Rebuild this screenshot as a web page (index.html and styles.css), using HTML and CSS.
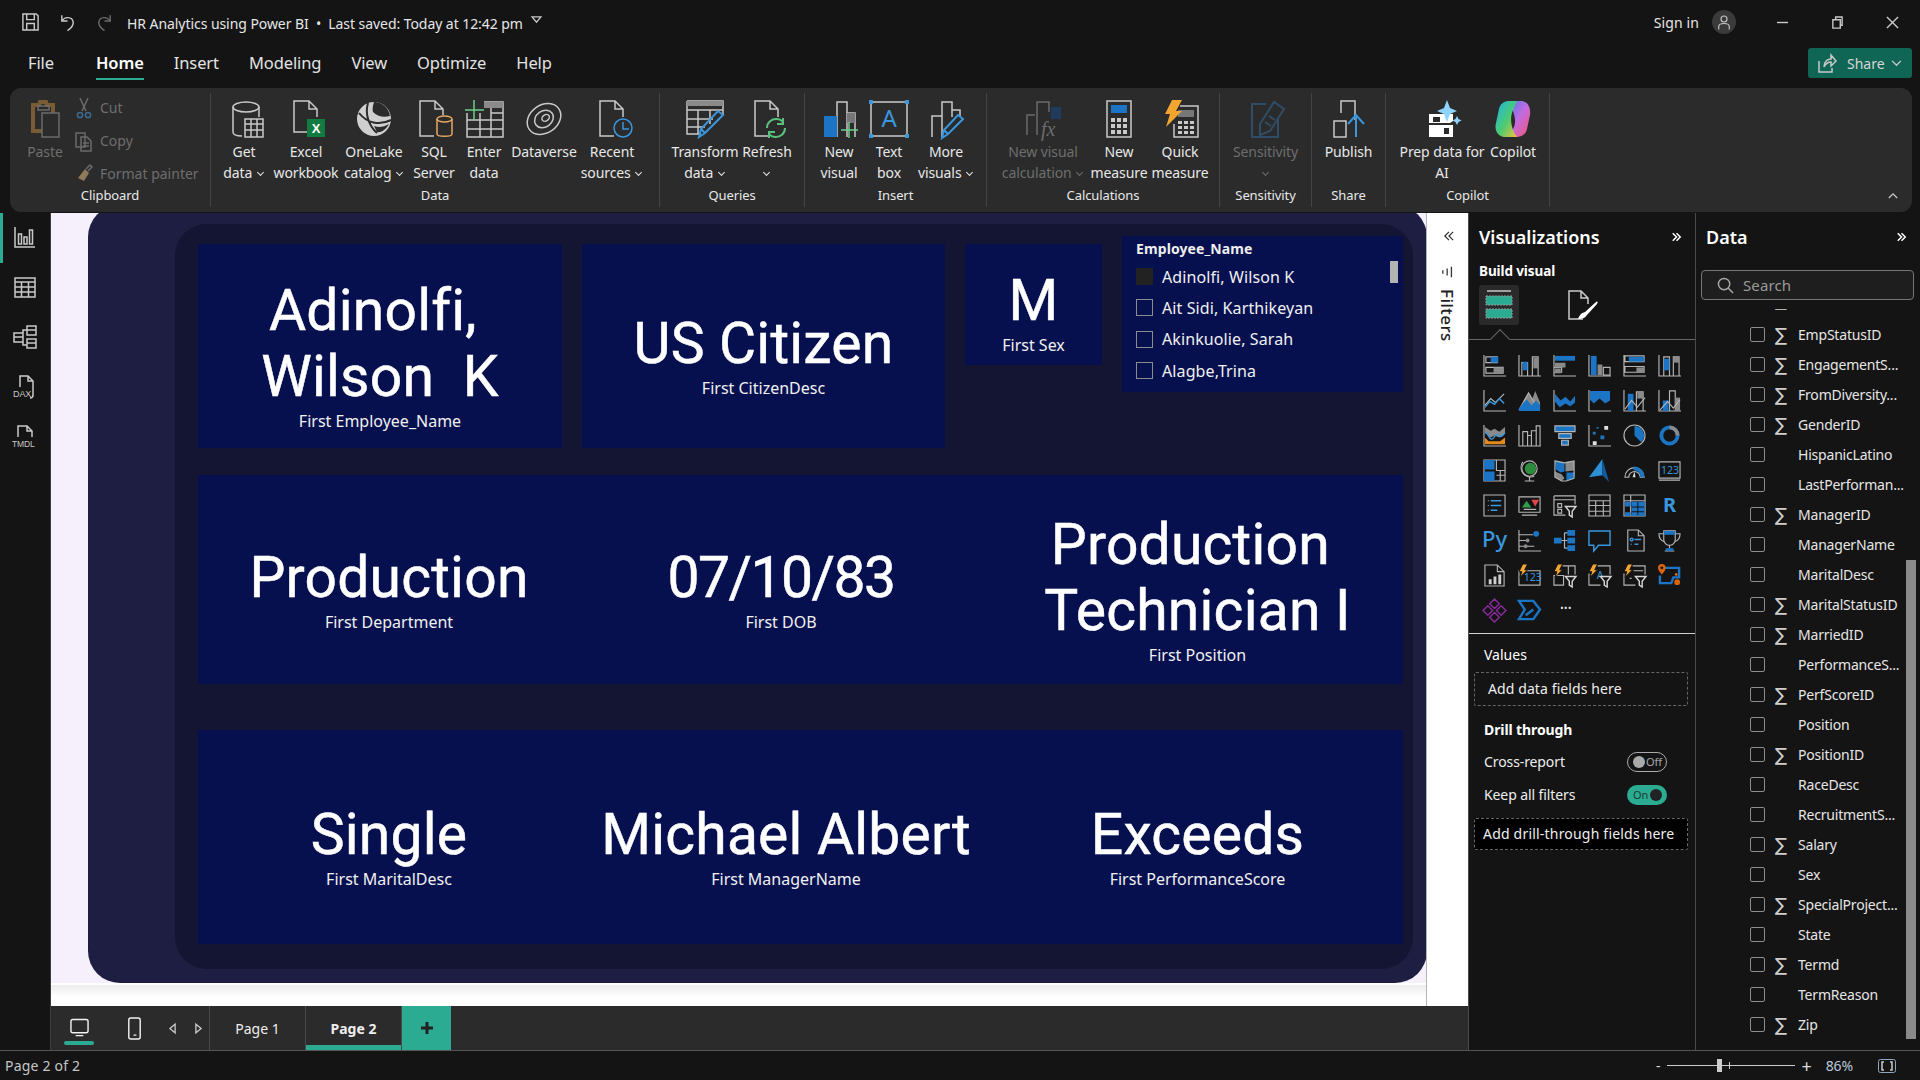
FILE: index.html
```html
<!DOCTYPE html>
<html lang="en">
<head>
    <meta charset="UTF-8">
    <title>HR Analytics using Power BI</title>
    <link rel="stylesheet" href="styles.css">
</head>
<body>
<div class="app">

    <!-- title bar -->
    <header class="titlebar">
        <svg class="tb-ic save" viewBox="0 0 20 20"><path class="ln" d="M2 1.500h14l2 2v15H2zM6 1.500v6h8v-6M6 18.500v-7h8v7"/></svg>
        <svg class="tb-ic undo" viewBox="0 0 20 20"><path class="ln" d="M4 3v6h6M4 9c3-5 11-5 12 1 .5 4-3 7-6 9"/></svg>
        <svg class="tb-ic redo" viewBox="0 0 20 20"><path class="ln dim" d="M16 3v6h-6M16 9c-3-5-11-5-12 1-.5 4 3 7 6 9"/></svg>
        <span class="doc-title">HR Analytics using Power BI &nbsp;•&nbsp; Last saved: Today at 12:42 pm</span>
        <svg class="doc-caret" viewBox="0 0 12 8"><path class="ln" d="M1 1h10L6 7z"/></svg>
        <span class="spacer"></span>
        <span class="signin">Sign in</span>
        <span class="avatar"><svg viewBox="0 0 24 24"><circle class="ln" cx="12" cy="8" r="4"/><path class="ln" d="M5 22v-4c0-3 3-4 7-4s7 1 7 4v4"/></svg></span>
        <svg class="win-ic win-min" viewBox="0 0 14 14"><path class="ln" d="M1 7h12"/></svg>
        <svg class="win-ic win-max" viewBox="0 0 14 14"><path class="ln" d="M2 4h8v9H2zM5 4V1h7v9h-2"/></svg>
        <svg class="win-ic win-close" viewBox="0 0 14 14"><path class="ln" d="M1 1l12 12M13 1L1 13"/></svg>
    </header>

    <!-- ribbon tabs -->
    <nav class="tabrow">
        <a class="tab tab-file">File</a>
        <a class="tab tab-on">Home</a>
        <a class="tab">Insert</a>
        <a class="tab">Modeling</a>
        <a class="tab">View</a>
        <a class="tab">Optimize</a>
        <a class="tab">Help</a>
        <span class="spacer"></span>
        <button class="share">
            <svg viewBox="0 0 20 20"><path class="ln" d="M2 8v11h13v-4M7 14c0-6 4-8 7-8V2l5 6-5 5V9c-3 0-5 1-7 5z"/></svg>
            <span>Share</span>
            <svg class="share-chev" viewBox="0 0 12 8"><path class="ln" d="M1 1l5 5 5-5"/></svg>
        </button>
    </nav>

    <!-- ribbon -->
    <section class="ribbon">
        <div class="rgroup g-clip">
            <div class="rbtns">
                <div class="rbtn w56 off">
                    <svg class="ric" viewBox="0 0 40 38"><path class="dimbrown" d="M8 5h6l1-3h6l1 3h6v26H8z"/><path class="fill-rib" d="M17 13h17v24H17z"/><path class="ln dim" d="M17 13h17v24H17zM13 6h11v4H13z"/></svg>
                    <span class="rlabel">Paste</span>
                </div>
                <div class="smallcol off">
                    <div class="sbtn"><svg viewBox="0 0 18 22"><path class="ln dim" d="M5 1l6 13M13 1L7 14"/><circle class="ln bluedim" cx="5" cy="18" r="2.600"/><circle class="ln bluedim" cx="13" cy="18" r="2.600"/></svg><span>Cut</span></div>
                    <div class="sbtn"><svg viewBox="0 0 18 22"><path class="ln dim" d="M1 3h9v14H1zM6 7h6l4 4v10H6zM8 13h6M8 16h6"/></svg><span>Copy</span></div>
                    <div class="sbtn"><svg viewBox="0 0 18 22"><path class="goldfill" d="M10 6l4 4-5 8-6-3z"/><path class="ln dim" d="M11 6l4-4 2 2-4 4"/></svg><span>Format painter</span></div>
                </div>
            </div>
            <div class="gname">Clipboard</div>
        </div>

        <div class="rgroup g-data">
            <div class="rbtns">
                <div class="rbtn w52">
                    <svg class="ric" viewBox="-3 0 40 38"><path class="ln" d="M6 7v25c0 3 5 4 9 4M32 7v10"/><ellipse class="ln" cx="19" cy="7" rx="13" ry="5"/><path class="ln" d="M18 19h18v18H18zM18 24h18M18 30h18M24 19v18M30 19v18"/></svg>
                    <span class="rlabel">Get<br>data <i class="chv"></i></span>
                </div>
                <div class="rbtn w72">
                    <svg class="ric" viewBox="0 0 40 38"><path class="ln" d="M24 32H8V1h15l8 8v8M23 1v8h8"/><rect class="fill-green" x="21" y="19" width="18" height="18"/><text class="xmark" x="30" y="33">X</text></svg>
                    <span class="rlabel">Excel<br>workbook</span>
                </div>
                <div class="rbtn w64">
                    <svg class="ric" viewBox="0 0 40 38"><circle class="fill-lake" cx="20" cy="19" r="17"/><path class="ln dark" d="M14 3c-3 10 0 22 9 30M5 13c8 10 20 13 32 7"/><path class="fill-rib" d="M20 2c8 0 15 6 16 14-7 2-13 0-17-4-1-3 0-7 1-10zM23 32c5 1 9-3 12-8-5 3-10 4-15 2z"/></svg>
                    <span class="rlabel">OneLake<br>catalog <i class="chv"></i></span>
                </div>
                <div class="rbtn w56">
                    <svg class="ric" viewBox="0 0 40 38"><path class="ln" d="M20 36H6V1h15l8 8v6M21 1v8h8"/><path class="ln orange" d="M23 19v15c0 3 15 3 15 0V19"/><ellipse class="ln orange" cx="30.500" cy="19" rx="7.500" ry="3"/></svg>
                    <span class="rlabel">SQL<br>Server</span>
                </div>
                <div class="rbtn w44">
                    <svg class="ric" viewBox="0 0 40 38"><path class="ln" d="M3 13v24h36V2H20M3 20h36M3 29h36M16 13v24M27 2v35M27 13h12"/><path class="tophead" d="M20 2h19v6H20z"/><path class="ln green2" d="M10 0v20M1 10h19"/></svg>
                    <span class="rlabel">Enter<br>data</span>
                </div>
                <div class="rbtn w76">
                    <svg class="ric" viewBox="0 0 40 38"><g transform="rotate(-35 20 19)"><ellipse class="ln" cx="20" cy="19" rx="18" ry="14"/><ellipse class="ln" cx="20" cy="19" rx="10" ry="8"/><ellipse class="ln" cx="22" cy="19" rx="4" ry="3"/></g></svg>
                    <span class="rlabel">Dataverse</span>
                </div>
                <div class="rbtn w60">
                    <svg class="ric" viewBox="0 0 40 38"><path class="ln" d="M22 36H8V1h15l8 8v8M23 1v8h8"/><circle class="ln blue" cx="31" cy="28" r="9"/><path class="ln blue" d="M31 22v7h6"/></svg>
                    <span class="rlabel">Recent<br>sources <i class="chv"></i></span>
                </div>
            </div>
            <div class="gname">Data</div>
        </div>

        <div class="rgroup g-query">
            <div class="rbtns">
                <div class="rbtn w66">
                    <svg class="ric" viewBox="0 0 40 38"><path class="ln" d="M2 1h36v14M2 1v33h14M2 10h36M2 19h26M2 27h18M13 10v24M25 10v14"/><path class="tophead" d="M2 1h36v5H2z"/><path class="ln blue thick" d="M14 37l2-8L33 11l5 4-18 18zM16 29l4 4"/></svg>
                    <span class="rlabel">Transform<br>data <i class="chv"></i></span>
                </div>
                <div class="rbtn w58">
                    <svg class="ric" viewBox="0 0 40 38"><path class="ln" d="M22 36H8V1h15l8 8v8M23 1v8h8"/><path class="ln green3 thick" d="M20 28c0-6 5-9 9-9 3 0 6 1 7 4M38 28c0 6-5 9-9 9-3 0-6-1-7-4M36 18v6h-6M22 38v-6h6"/></svg>
                    <span class="rlabel">Refresh<br><i class="chv solo"></i></span>
                </div>
            </div>
            <div class="gname">Queries</div>
        </div>

        <div class="rgroup g-insert">
            <div class="rbtns">
                <div class="rbtn w48">
                    <svg class="ric" viewBox="0 0 40 38"><path class="ln" d="M18 37V2h10v35M28 13h8v24"/><rect class="fill-gray" x="28" y="13" width="8" height="10"/><rect class="fill-blue" x="5" y="16" width="13" height="21"/><path class="ln green2" d="M30 22v16M22 30h17"/></svg>
                    <span class="rlabel">New<br>visual</span>
                </div>
                <div class="rbtn w52">
                    <svg class="ric" viewBox="0 0 40 38"><path class="ln" d="M2 2h36v34H2z"/><path class="corner" d="M0 0h4v4H0zM36 0h4v4h-4zM0 34h4v4H0zM36 34h4v4h-4z"/><text class="boxa" x="20" y="27">A</text></svg>
                    <span class="rlabel">Text<br>box</span>
                </div>
                <div class="rbtn w62">
                    <svg class="ric" viewBox="2 0 40 38"><path class="ln" d="M8 37V16h10v21M18 37V2h10v15M28 10h8v7"/><path class="ln blue thick" d="M18 38l2-8 14-15 5 4-15 15zM20 30l4 4"/></svg>
                    <span class="rlabel">More<br>visuals <i class="chv"></i></span>
                </div>
            </div>
            <div class="gname">Insert</div>
        </div>

        <div class="rgroup g-calc">
            <div class="rbtns">
                <div class="rbtn w96 off">
                    <svg class="ric" viewBox="0 0 40 38"><path class="ln dim" d="M4 35V15h8M14 35V2h12v10"/><rect class="fill-navy" x="28" y="7" width="10" height="12"/><text class="fx" x="18" y="36">fx</text></svg>
                    <span class="rlabel">New visual<br>calculation <i class="chv"></i></span>
                </div>
                <div class="rbtn w56">
                    <svg class="ric" viewBox="0 0 40 38"><path class="ln" d="M8 1h24v36H8z"/><rect class="fill-blue" x="12" y="5" width="16" height="8"/><path class="dots" d="M12 18h4v4h-4zM18 18h4v4h-4zM24 18h4v4h-4zM12 24h4v4h-4zM18 24h4v4h-4zM24 24h4v4h-4zM12 30h4v4h-4zM18 30h4v4h-4zM24 30h4v4h-4z"/></svg>
                    <span class="rlabel">New<br>measure</span>
                </div>
                <div class="rbtn w66">
                    <svg class="ric" viewBox="0 0 40 38"><path class="ln" d="M20 6h18v31H14V24"/><rect class="fill-gray" x="18" y="10" width="16" height="7"/><path class="dots" d="M18 21h4v3h-4zM24 21h4v3h-4zM30 21h4v3h-4zM18 26h4v3h-4zM24 26h4v3h-4zM30 26h4v3h-4zM18 31h4v3h-4zM24 31h4v3h-4zM30 31h4v3h-4z"/><path class="fill-bolt" d="M12 0h10l-6 11h6L6 27l4-13H5z"/></svg>
                    <span class="rlabel">Quick<br>measure</span>
                </div>
            </div>
            <div class="gname">Calculations</div>
        </div>

        <div class="rgroup g-sens">
            <div class="rbtns">
                <div class="rbtn w92 off">
                    <svg class="ric" viewBox="0 0 40 38"><path class="ln senscol thick" d="M20 4H6v33h26V18"/><path class="ln senscol thick" d="M14 24L28 2l10 7-14 22-10 4zM19 22l6 4M23 16l6 4"/></svg>
                    <span class="rlabel">Sensitivity<br><i class="chv solo"></i></span>
                </div>
            </div>
            <div class="gname">Sensitivity</div>
        </div>

        <div class="rgroup g-share">
            <div class="rbtns">
                <div class="rbtn w74">
                    <svg class="ric" viewBox="0 0 40 38"><path class="ln" d="M5 37V21h12v16zM12 13V1h14v19"/><path class="ln blue thick" d="M27 37V16M19 24l8-9 8 9"/></svg>
                    <span class="rlabel">Publish</span>
                </div>
            </div>
            <div class="gname">Share</div>
        </div>

        <div class="rgroup g-copilot">
            <div class="rbtns">
                <div class="rbtn w92">
                    <svg class="ric" viewBox="0 0 40 38"><path class="fill-white" d="M7 14h24v7l-3 2H7zM7 25h24v12H7z"/><rect class="fill-rib" x="11" y="17" width="7" height="5"/><rect class="fill-rib" x="22" y="28" width="5" height="6"/><path class="fill-spark" d="M25 0l3 8 7 3-7 3-3 8-3-8-7-3 7-3zM35 16l1.500 3 3 1.500-3 1.500-1.500 3-1.500-3-3-1.500 3-1.500z"/></svg>
                    <span class="rlabel">Prep data for<br>AI</span>
                </div>
                <div class="rbtn w50">
                    <svg class="ric" viewBox="0 0 40 38">
                        <defs>
                            <linearGradient id="cpa" x1="0" y1="0" x2="1" y2="1"><stop offset="0" stop-color="#1bb4e8"/><stop offset=".55" stop-color="#4ecb71"/><stop offset="1" stop-color="#f5c13c"/></linearGradient>
                            <linearGradient id="cpb" x1="0" y1="0" x2="1" y2="1"><stop offset="0" stop-color="#3d7cf2"/><stop offset=".5" stop-color="#c46be0"/><stop offset="1" stop-color="#f0566f"/></linearGradient>
                        </defs>
                        <path fill="url(#cpb)" d="M14 1h14c7 0 10 7 9 14l-3 14c-1 5-5 8-10 8h-8l5-10c2-5 2-14-7-26z"/>
                        <path fill="url(#cpa)" d="M24 37H12C5 37 1 30 3 23l3-14C7 4 11 1 16 1h8l-4 9c-3 6-3 18 4 27z"/>
                    </svg>
                    <span class="rlabel">Copilot</span>
                </div>
            </div>
            <div class="gname">Copilot</div>
        </div>
        <span class="spacer"></span>
        <svg class="rib-collapse" viewBox="0 0 12 8"><path class="ln" d="M1 7l5-5 5 5"/></svg>
    </section>

    <!-- main area -->
    <div class="workspace">
        <aside class="rail">
            <div class="rail-item rail-on"><svg viewBox="0 0 24 24"><path class="ln" d="M2 2v20h20M5.500 9h3v10h-3zM11 12h3v7h-3zM16.500 5h3v14h-3z"/></svg></div>
            <div class="rail-item"><svg viewBox="0 0 24 24"><path class="ln" d="M2 3h20v19H2zM2 7h20M2 12h20M2 17h20M8.500 7v15M15.500 7v15"/></svg></div>
            <div class="rail-item"><svg viewBox="0 0 24 24"><path class="ln" d="M14 1h9v9h-9zM14 5h9M1 8h9v9H1zM1 12h9M14 14h9v9h-9zM14 18h9M10 8V5h4M10 17v3h4"/></svg></div>
            <div class="rail-item"><svg viewBox="0 0 24 24"><path class="ln" d="M7 12V1h8l5 5v14M15 1v5h5M20 20c0 2-1 3-3 3"/><text class="rail-txt" x="0" y="22">DAX</text></svg></div>
            <div class="rail-item"><svg viewBox="0 0 24 24"><path class="ln" d="M5 12V1h9l5 5v6M14 1v5h5"/><text class="rail-txt rail-tmdl" x="-1" y="22">TMDL</text></svg></div>
        </aside>

        <main class="center">
            <div class="canvas-row">
                <div class="canvas">
                    <div class="page">
                        <div class="panel">
                            <div class="inner">
                                <div class="row row-top">
                                    <div class="card">
                                        <div class="val">Adinolfi, 
Wilson  K</div>
                                        <div class="cap">First Employee_Name</div>
                                    </div>
                                    <div class="card">
                                        <div class="val">US Citizen</div>
                                        <div class="cap">First CitizenDesc</div>
                                    </div>
                                    <div class="card card-sex">
                                        <div class="val">M</div>
                                        <div class="cap">First Sex</div>
                                    </div>
                                    <div class="slicer">
                                        <div class="sl-head">Employee_Name</div>
                                        <div class="sl-row"><i class="sl-box sl-fill"></i>Adinolfi, Wilson K</div>
                                        <div class="sl-row"><i class="sl-box"></i>Ait Sidi, Karthikeyan</div>
                                        <div class="sl-row"><i class="sl-box"></i>Akinkuolie, Sarah</div>
                                        <div class="sl-row"><i class="sl-box"></i>Alagbe,Trina</div>
                                        <span class="sl-scroll"></span>
                                    </div>
                                </div>
                                <div class="row row-mid">
                                    <div class="cell">
                                        <div class="val">Production</div>
                                        <div class="cap">First Department</div>
                                    </div>
                                    <div class="cell cell-dob">
                                        <div class="val val-date">07/10/83</div>
                                        <div class="cap">First DOB</div>
                                    </div>
                                    <div class="cell">
                                        <div class="val">Production 
Technician I</div>
                                        <div class="cap">First Position</div>
                                    </div>
                                </div>
                                <div class="row row-bot">
                                    <div class="cell">
                                        <div class="val">Single</div>
                                        <div class="cap">First MaritalDesc</div>
                                    </div>
                                    <div class="cell">
                                        <div class="val">Michael Albert</div>
                                        <div class="cap">First ManagerName</div>
                                    </div>
                                    <div class="cell">
                                        <div class="val">Exceeds</div>
                                        <div class="cap">First PerformanceScore</div>
                                    </div>
                                </div>
                            </div>
                        </div>
                    </div>
                    <div class="page-shadow"></div>
                </div>
                <div class="filters">
                    <svg class="fl-chev" viewBox="0 0 12 12"><path class="ln inkline" d="M6 1L1 6l5 5M11 1L6 6l5 5"/></svg>
                    <svg class="fl-ic" viewBox="0 0 14 14"><path class="ln inkline" d="M1 5v4M6 3v8M11 1v12"/></svg>
                    <span class="fl-text">Filters</span>
                </div>
            </div>

            <div class="pagebar">
                <div class="pb-views">
                    <span class="pb-view pb-view-on"><svg viewBox="0 0 20 20"><path class="ln wh" d="M3 1h14a2 2 0 0 1 2 2v10a2 2 0 0 1-2 2H3a2 2 0 0 1-2-2V3a2 2 0 0 1 2-2zM6 18h8"/></svg></span>
                    <span class="pb-view"><svg viewBox="0 0 20 24"><path class="ln wh" d="M6 1h8a2 2 0 0 1 2 2v18a2 2 0 0 1-2 2H6a2 2 0 0 1-2-2V3a2 2 0 0 1 2-2zM9 19h3"/></svg></span>
                    <svg class="pb-arrow" viewBox="0 0 8 12"><path class="ln" d="M7 1v10L1 6z"/></svg>
                    <svg class="pb-arrow" viewBox="0 0 8 12"><path class="ln" d="M1 1v10l6-5z"/></svg>
                </div>
                <span class="pb-tab">Page 1</span>
                <span class="pb-tab pb-tab-on">Page 2</span>
                <span class="pb-add"><svg viewBox="0 0 14 14"><path class="plus" d="M7 1v12M1 7h12"/></svg></span>
            </div>
        </main>

        <aside class="viz">
            <h2 class="pane-title">Visualizations <svg class="pane-chev" viewBox="0 0 12 12"><path class="ln" d="M1 1l5 5-5 5M6 1l5 5-5 5"/></svg></h2>
            <div class="build-label">Build visual</div>
            <div class="build-tabs">
                <span class="build-tab build-tab-on"><svg viewBox="0 0 30 30"><path class="ln" d="M3 1h24"/><rect class="tealbox" x="2" y="6" width="26" height="9"/><rect class="tealbox" x="2" y="19" width="26" height="9"/></svg></span>
                <span class="build-tab"><svg viewBox="0 0 30 30"><path class="ln" d="M15 29H1V1h12l7 7v6M13 1v7h7"/><path class="fill-white" d="M10 29c2-5 4-6 7-7L28 12c2-1 2 0 1 2L19 25c-2 3-5 4-9 4z"/></svg></span>
            </div>
            <div class="build-rule"><i></i></div>
            <div class="vizgrid">
                <svg viewBox="0 0 24 24"><path class="s" d="M1 1v22h23"/><path class="s" d="M3 3h12v6H3zM3 14h18v6H3z"/><path class="b" d="M8 3h8v6H8z"/><path class="f" d="M11 14h10v6H11z"/></svg>
                <svg viewBox="0 0 24 24"><path class="s" d="M1 1v22h23M4 9h6v14H4zM15 3h6v20h-6z"/><path class="b" d="M5 8h5v9H5z"/><path class="f" d="M16 4h5v11h-5z"/></svg>
                <svg viewBox="0 0 24 24"><path class="s" d="M1 1v22h23M1 14h8v5H1z"/><path class="b" d="M2 2h21v5H2z"/><path class="f" d="M2 9h11v5H2zM2 15h6v5H2z"/></svg>
                <svg viewBox="0 0 24 24"><path class="s" d="M1 1v22h23"/><path class="b" d="M3 2h6v20H3z"/><path class="f" d="M10 11h5v11h-5z"/><path class="s" d="M16 14h7v8h-7z"/></svg>
                <svg viewBox="0 0 24 24"><path class="s" d="M1 1v22h23M2 2h20v6H2zM2 13h20v6H2z"/><path class="b" d="M6 3h16v5H6z"/><path class="f" d="M14 14h8v5h-8z"/></svg>
                <svg viewBox="0 0 24 24"><path class="s" d="M1 1v22h23M6 3h6v20H6zM16 3h6v20h-6z"/><path class="b" d="M6 5h6v12H6z"/><path class="f" d="M16 3h6v6h-6z"/></svg>

                <svg viewBox="0 0 24 24"><path class="s" d="M1 1v22h23"/><path class="s" d="M2 17l6-7 5 4 9-9"/><path class="bl" d="M2 19l5-6 5 3 5-6 5 5"/></svg>
                <svg viewBox="0 0 24 24"><path class="f" d="M6 12l5-8 4 6 3-8 5 12v9H6z"/><path class="s" d="M1 22L11 4l7 12"/><path class="b" d="M1 23V20l8-9 5 6 5-5 4 5v6z"/></svg>
                <svg viewBox="0 0 24 24"><path class="s" d="M1 1v22h23"/><path class="b" d="M2 5l6 7 5-4 5 5 5-6v7l-5 4-5-3-6 4-5-6z"/></svg>
                <svg viewBox="0 0 24 24"><path class="s" d="M1 1v22h23"/><path class="b" d="M2 2h21v10l-5 3-6-5-6 5-4-4z"/></svg>
                <svg viewBox="0 0 24 24"><path class="s" d="M1 1v22h23M14 3h7v20h-7z"/><path class="b" d="M5 5h6v18H5z"/><path class="f" d="M15 3h6v7h-6z"/><path class="s" d="M2 21l7-9 6 7 8-10"/></svg>
                <svg viewBox="0 0 24 24"><path class="s" d="M1 1v22h23M12 2h6v21h-6z"/><path class="b" d="M5 12h6v11H5z"/><path class="f" d="M18 9h5v14h-5z"/><path class="s" d="M2 22l8-9 6 7 7-9"/></svg>

                <svg viewBox="0 0 24 24"><path class="s" d="M1 1v22h23"/><path class="f" d="M2 3l6 4 4-2 5 3 6-5v7l-6 4-5-2-4 2-6-5z"/><path class="o" d="M2 14l4 4h12l5-4v7H2z"/><path class="bl" d="M2 9c4 0 4 7 7 7s3-6 6-5 3 5 8-2"/></svg>
                <svg viewBox="0 0 24 24"><path class="s" d="M1 1v22h23M5 8h5v15H5zM10 12h4v11h-4zM14 7h5v16h-5zM19 2h4v21h-4z"/></svg>
                <svg viewBox="0 0 24 24"><path class="b" d="M2 2h21v6H2zM6 10h13v5H6zM9 17h7v5H9z"/><path class="s" d="M2 2h21v6H2zM6 10h13v5H6zM9 17h7v5H9z"/></svg>
                <svg viewBox="0 0 24 24"><path class="s" d="M1 1v22h23"/><path class="b" d="M5 8h3v3H5zM13 12h4v4h-4zM9 3h2v2H9z"/><path class="w" d="M17 2h4v4h-4zM5 18h4v4H5z"/></svg>
                <svg viewBox="0 0 24 24"><circle class="s" cx="12" cy="12" r="11"/><path class="b" d="M12 2a10 10 0 0 1 7 17L12 12z"/></svg>
                <svg viewBox="0 0 24 24"><circle class="ring" cx="12" cy="12" r="8.500"/><path class="ringg" d="M12 3.500a8.500 8.500 0 0 1 8.500 8.500"/></svg>

                <svg viewBox="0 0 24 24"><path class="s" d="M1 1h22v22H1z"/><path class="b" d="M1 1h11v10H1zM1 13h11v10H1z"/><path class="s" d="M14 1v11h9M18 12v11M14 17h9"/></svg>
                <svg viewBox="0 0 24 24"><circle class="s" cx="12" cy="10" r="8"/><circle class="g" cx="13" cy="10" r="6"/><path class="s" d="M5 3a10 10 0 0 0 12 15M7 23h10M12 19v4"/></svg>
                <svg viewBox="0 0 24 24"><path class="f" d="M2 13l7 3 3 4-3 3-7-4zM13 3l9-1v10l-9 1z"/><path class="b" d="M2 2l10 2v9l-4 1-5-3zM14 14h9l-2 7-7 2z"/><path class="s" d="M2 2l10 2 10-2v18l-8 3-5 0-7-4z"/></svg>
                <svg viewBox="0 0 24 24"><path class="tri1" d="M15 0L1 19l14-2z"/><path class="tri2" d="M15 0l7 24-7-7z"/></svg>
                <svg viewBox="0 0 24 24"><path class="s" d="M2 19a10 10 0 0 1 20 0h-4a6 6 0 0 0-12 0z"/><path class="b" d="M11 8a10 10 0 0 1 11 11h-4a6 6 0 0 0-7-7z"/><path class="w" d="M12 13l-2 6h3z"/></svg>
                <svg viewBox="0 0 24 24"><path class="s" d="M1 3h22v17H1zM1 22h22"/><text class="vt" x="3" y="16">123</text></svg>

                <svg viewBox="0 0 24 24"><path class="s" d="M1 1h22v22H1zM5 7h1M5 12h1M5 17h1"/><path class="bl" d="M8 7h11M8 12h11M8 17h7"/></svg>
                <svg viewBox="0 0 24 24"><path class="s" d="M1 3h22v16H1zM4 22h16M6 16h13"/><path class="gg" d="M9 7l5 7H4z"/><path class="rr" d="M14 6h8l-4 7z"/></svg>
                <svg viewBox="0 0 24 24"><path class="s" d="M1 2h22v9M1 6h22M1 2v20h12M5 10h4v4H5zM5 16h4v4H5z"/><path class="fn" d="M13 13h11l-4 5v6l-3-2v-4z"/></svg>
                <svg viewBox="0 0 24 24"><path class="s" d="M1 1h22v22H1zM1 7h22M1 12h22M1 18h22M8 7v16M16 7v16"/></svg>
                <svg viewBox="0 0 24 24"><path class="s" d="M1 1h22v22H1zM1 7h22M8 1v22"/><path class="b" d="M2 8h6v5H2zM9 8h6v5H9zM16 8h7v5h-7zM9 14h6v4H9zM16 14h7v4h-7zM2 19h6v4H2zM9 19h6v4H9zM16 19h7v4h-7z"/></svg>
                <svg viewBox="0 0 24 24"><text class="vr" x="12" y="19">R</text></svg>

                <svg viewBox="0 0 24 24"><text class="vpy" x="-1" y="19">Py</text></svg>
                <svg viewBox="0 0 24 24"><path class="s" d="M1 1v22h23M1 6h15M1 12h9M1 18h16"/><circle class="b" cx="19" cy="5" r="3"/><circle class="f" cx="10" cy="12" r="2"/><circle class="f" cx="8" cy="18" r="2"/></svg>
                <svg viewBox="0 0 24 24"><path class="b" d="M1 9h8v6H1zM15 1h8v6h-8zM15 9h8v6h-8zM15 17h8v6h-8z"/><path class="s" d="M9 12h6M12 4v16M12 4h3M12 20h3"/></svg>
                <svg viewBox="0 0 24 24"><path class="blx" d="M1 2h22v15H11l-5 6v-6H1z"/></svg>
                <svg viewBox="0 0 24 24"><path class="s" d="M5 1h11l6 6v16H5zM16 1v6h6"/><circle class="blx" cx="9" cy="11" r="1.500"/><path class="bl" d="M8 16h1M12 11h7M12 16h4"/></svg>
                <svg viewBox="0 0 24 24"><path class="s" d="M6 2h12v9a6 6 0 0 1-12 0zM6 5H1c0 5 2 7 5 8M18 5h5c0 5-2 7-5 8M12 17v3M7 23h10"/><path class="b" d="M6 2h12v4H6zM8 20h8v3H8z"/></svg>

                <svg viewBox="0 0 24 24"><path class="s" d="M2 1h13l7 7v15H2zM15 1v7h7"/><path class="fw" d="M6 16h3v5H6zM11 13h3v8h-3zM16 11h3v10h-3z"/></svg>
                <svg viewBox="0 0 24 24"><path class="s" d="M1 7h22v15H1z"/><text class="vt" x="6" y="18">123</text><path class="bolt" d="M5 0h5L7 6h3L2 14l2-6H1z"/></svg>
                <svg viewBox="0 0 24 24"><path class="s" d="M10 2h13v9M1 12h10v10H1zM16 2v9"/><path class="bolt" d="M5 0h5L7 6h3L2 14l2-6H1z"/><path class="fn" d="M13 13h11l-4 5v6l-3-2v-4z"/></svg>
                <svg viewBox="0 0 24 24"><path class="s" d="M10 2h13v9M1 10v12h12"/><text class="vt" x="9" y="16">A</text><path class="bolt" d="M5 0h5L7 6h3L2 14l2-6H1z"/><path class="fn" d="M13 13h11l-4 5v6l-3-2v-4z"/></svg>
                <svg viewBox="0 0 24 24"><path class="s" d="M10 2h13v9M1 10v12h12M11 7h10M7 15h2"/><path class="bolt" d="M5 0h5L7 6h3L2 14l2-6H1z"/><path class="fn" d="M13 13h11l-4 5v6l-3-2v-4z"/></svg>
                <svg viewBox="0 0 24 24"><path class="blx2" d="M7 4h15v10h-6l-2 6H2v-8"/><path class="oo" d="M4 0a4 4 0 0 1 4 4c0 3-4 7-4 7S0 7 0 4a4 4 0 0 1 4-4z"/><circle class="bk" cx="4" cy="4" r="1.500"/><circle class="oo" cx="20" cy="19" r="3"/><circle class="oo" cx="19" cy="11" r="1.500"/></svg>

                <svg viewBox="0 0 24 24"><path class="pur" d="M7 5l5-5 5 5-5 5zM14 12l5-5 5 5-5 5zM0 12l5-5 5 5-5 5zM7 19l5-5 5 5-5 5z"/></svg>
                <svg viewBox="0 0 24 24"><path class="blx2" d="M1 2h15l7 9-7 10H1l6-10zM8 17l8-6"/></svg>
                <span class="viz-more">•••</span>
            </div>
            <div class="viz-rule"></div>
            <div class="well-label">Values</div>
            <div class="well">Add data fields here</div>
            <div class="drill-title">Drill through</div>
            <div class="toggle-row toggle-first"><span>Cross-report</span><span class="toggle toggle-off"><i></i>Off</span></div>
            <div class="toggle-row"><span>Keep all filters</span><span class="toggle toggle-on">On<i></i></span></div>
            <div class="well well-black">Add drill-through fields here</div>
        </aside>

        <aside class="data">
            <h2 class="pane-title">Data <svg class="pane-chev" viewBox="0 0 12 12"><path class="ln" d="M1 1l5 5-5 5M6 1l5 5-5 5"/></svg></h2>
            <div class="search">
                <svg viewBox="0 0 18 18"><circle class="ln" cx="7.500" cy="7.500" r="6"/><path class="ln" d="M12 12l5 5"/></svg>
                <span>Search</span>
            </div>
            <div class="fields">
                <div class="field field-cut"><i class="cb"></i><b class="sig">∑</b><span>EmpID</span></div>
                <div class="field"><i class="cb"></i><b class="sig">∑</b><span>EmpStatusID</span></div>
                <div class="field"><i class="cb"></i><b class="sig">∑</b><span>EngagementS...</span></div>
                <div class="field"><i class="cb"></i><b class="sig">∑</b><span>FromDiversity...</span></div>
                <div class="field"><i class="cb"></i><b class="sig">∑</b><span>GenderID</span></div>
                <div class="field"><i class="cb"></i><b class="sig"></b><span>HispanicLatino</span></div>
                <div class="field"><i class="cb"></i><b class="sig"></b><span>LastPerforman...</span></div>
                <div class="field"><i class="cb"></i><b class="sig">∑</b><span>ManagerID</span></div>
                <div class="field"><i class="cb"></i><b class="sig"></b><span>ManagerName</span></div>
                <div class="field"><i class="cb"></i><b class="sig"></b><span>MaritalDesc</span></div>
                <div class="field"><i class="cb"></i><b class="sig">∑</b><span>MaritalStatusID</span></div>
                <div class="field"><i class="cb"></i><b class="sig">∑</b><span>MarriedID</span></div>
                <div class="field"><i class="cb"></i><b class="sig"></b><span>PerformanceS...</span></div>
                <div class="field"><i class="cb"></i><b class="sig">∑</b><span>PerfScoreID</span></div>
                <div class="field"><i class="cb"></i><b class="sig"></b><span>Position</span></div>
                <div class="field"><i class="cb"></i><b class="sig">∑</b><span>PositionID</span></div>
                <div class="field"><i class="cb"></i><b class="sig"></b><span>RaceDesc</span></div>
                <div class="field"><i class="cb"></i><b class="sig"></b><span>RecruitmentS...</span></div>
                <div class="field"><i class="cb"></i><b class="sig">∑</b><span>Salary</span></div>
                <div class="field"><i class="cb"></i><b class="sig"></b><span>Sex</span></div>
                <div class="field"><i class="cb"></i><b class="sig">∑</b><span>SpecialProject...</span></div>
                <div class="field"><i class="cb"></i><b class="sig"></b><span>State</span></div>
                <div class="field"><i class="cb"></i><b class="sig">∑</b><span>Termd</span></div>
                <div class="field"><i class="cb"></i><b class="sig"></b><span>TermReason</span></div>
                <div class="field"><i class="cb"></i><b class="sig">∑</b><span>Zip</span></div>
                <span class="fields-scroll"></span>
            </div>
        </aside>
    </div>

    <!-- status bar -->
    <footer class="status">
        <span class="status-text">Page 2 of 2</span>
        <span class="spacer"></span>
        <span class="zoom-minus">-</span>
        <span class="zoom-track"><i class="zoom-thumb"></i><i class="zoom-tick"></i></span>
        <span class="zoom-plus">+</span>
        <span class="zoom-pct">86%</span>
        <svg class="zoom-fit" viewBox="0 0 18 14"><rect class="fitbox" x="0.500" y="0.500" width="17" height="13" rx="2"/><path class="ln" d="M6 3H4v8h2M12 3h2v8h-2"/></svg>
    </footer>
</div>
</body>
</html>
```

FILE: styles.css
```css
/* Power BI Desktop dark shell */
* {
    box-sizing: border-box;
}
html, body {
    margin: 0;
    padding: 0;
    height: 100%;
    overflow: hidden;
}
body {
    background: #141414;
    color: #fff;
    font-family: "Noto Sans", "Open Sans", sans-serif;
    font-size: 14px;
    letter-spacing: -0.1px;
}
.app {
    width: 1920px;
    height: 1080px;
    display: flex;
    flex-direction: column;
    overflow: hidden;
}
.spacer {
    flex: 1;
}
svg {
    display: block;
    overflow: visible;
}

/* shared svg strokes */
.ln { fill: none; stroke: #c9c9c9; stroke-width: 1.5; }
.ln.wh { stroke: #f2f2f2; }
.ln.dim { stroke: #6b6b6b; }
.ln.bluedim { stroke: #3d6a90; }
.ln.dark { stroke: #2b2b2b; stroke-width: 2; }
.ln.orange { stroke: #e8a860; }
.ln.blue { stroke: #3a96dd; }
.ln.green2 { stroke: #6fd08c; stroke-width: 1.5; }
.ln.green3 { stroke: #57c17b; }
.ln.thick { stroke-width: 2; }
.ln.senscol { stroke: #2f4d66; }
.ln.inkline { stroke: #333; }
.dimbrown { fill: none; stroke: #7a5c34; stroke-width: 4; }
.goldfill { fill: #8d7a58; }
.fill-rib { fill: #2b2b2b; }
.fill-green { fill: #107c41; }
.fill-lake { fill: #cfcfcf; }
.fill-gray { fill: #777; }
.fill-blue { fill: #1c74c4; }
.fill-navy { fill: #1e3a5c; }
.fill-bolt { fill: #f2a62f; }
.fill-white { fill: #fff; }
.fill-spark { fill: #8fd3ff; }
.tophead { fill: #8a8a8a; }
.corner { fill: #3a96dd; }
.dots { fill: #c9c9c9; }
.xmark { fill: #fff; font: 700 13px "Liberation Sans", sans-serif; text-anchor: middle; }
.boxa { fill: #3a96dd; font: 400 24px "Noto Sans", sans-serif; text-anchor: middle; }
.fx { fill: #6b6b6b; font: italic 20px "Liberation Serif", serif; }

/* title bar */
.titlebar {
    height: 47px;
    flex: none;
    display: flex;
    align-items: center;
    padding: 0 0 3px 21px;
}
.tb-ic {
    width: 19px;
    height: 20px;
}
.undo { margin-left: 18px; }
.redo { margin-left: 18px; }
.doc-title {
    margin: 2px 0 0 13px;
    font-size: 14px;
    color: #e6e6e6;
    white-space: nowrap;
    letter-spacing: -0.06px;
}
.doc-caret {
    width: 11px;
    height: 7px;
    margin: -6px 0 0 8px;
}
.signin {
    color: #e6e6e6;
    font-size: 14px;
    letter-spacing: 0.1px;
}
.avatar {
    width: 24px;
    height: 24px;
    border-radius: 50%;
    background: #3a3a3a;
    margin: 0 0 0 13px;
    padding: 3px;
}
.win-ic {
    width: 13px;
    height: 13px;
}
.win-min { margin-left: 40px; }
.win-max { margin-left: 42px; }
.win-close { margin: 0 21px 0 42px; }

/* ribbon tabs */
.tabrow {
    height: 41px;
    flex: none;
    display: flex;
    align-items: center;
    padding: 0 8px 9px 28px;
    gap: 30px;
}
.tab {
    font-size: 16.500px;
    letter-spacing: -0.1px;
    color: #e3e3e3;
    position: relative;
    line-height: 24px;
    white-space: nowrap;
}
.tab-file { margin-right: 12px; }
.tab-on {
    color: #fff;
    font-weight: 600;
}
.tab-on::after {
    content: "";
    position: absolute;
    left: 0;
    right: 0;
    bottom: -5px;
    height: 2px;
    background: #2bab91;
}
.share {
    width: 104px;
    height: 30px;
    background: #0f6655;
    color: #d7d7d7;
    border: none;
    border-radius: 3px;
    display: flex;
    align-items: center;
    padding: 0 0 0 9px;
    font: inherit;
    font-size: 14px;
}
.share svg {
    width: 20px;
    height: 20px;
    margin-right: 10px;
}
.share svg.share-chev {
    width: 11px;
    height: 7px;
    margin: 0 0 0 6px;
}

/* ribbon */
.ribbon {
    height: 124px;
    margin: 0 8px 0 10px;
    background: #2b2b2b;
    border-radius: 11px;
    display: flex;
    flex: none;
}
.rgroup {
    margin: 5px 0;
    height: 114px;
    border-right: 1px solid #444;
    padding-top: 7px;
}
.g-clip { width: 201px; }
.g-data { width: 449px; }
.g-query { width: 145px; }
.g-insert { width: 182px; }
.g-calc { width: 233px; }
.g-sens { width: 92px; }
.g-share { width: 74px; }
.g-copilot { width: 164px; }
.rbtns {
    display: flex;
    height: 85px;
}
.g-clip .rbtns { padding-left: 7px; }
.g-data .rbtns { padding-left: 7px; }
.g-query .rbtns { padding-left: 12px; }
.g-insert .rbtns { padding-left: 10px; }
.g-calc .rbtns { padding-left: 8px; }
.g-copilot .rbtns { padding-left: 10px; }
.rbtn {
    display: flex;
    flex-direction: column;
    align-items: center;
    color: #e8e8e8;
    font-size: 14px;
    line-height: 20.500px;
    text-align: center;
    white-space: nowrap;
}
.ric {
    width: 40px;
    height: 38px;
    margin-bottom: 4px;
    flex: none;
}
.w44 { width: 44px; }
.w48 { width: 48px; }
.w50 { width: 50px; }
.w52 { width: 52px; }
.w56 { width: 56px; }
.w58 { width: 58px; }
.w60 { width: 60px; }
.w62 { width: 62px; }
.w64 { width: 64px; }
.w66 { width: 66px; }
.w72 { width: 72px; }
.w74 { width: 74px; }
.w76 { width: 76px; }
.w92 { width: 92px; }
.w96 { width: 96px; }
.off { color: #6e6e6e; }
.chv {
    display: inline-block;
    width: 5px;
    height: 5px;
    border-right: 1px solid currentColor;
    border-bottom: 1px solid currentColor;
    transform: rotate(45deg);
    margin: 0 2px 3px 2px;
}
.gname {
    height: 20px;
    line-height: 20px;
    text-align: center;
    font-size: 13px;
    color: #e8e8e8;
}
.smallcol {
    margin: -9px 0 0 2px;
    height: 99px;
}
.sbtn {
    height: 33px;
    display: flex;
    align-items: center;
    gap: 7px;
    white-space: nowrap;
    letter-spacing: 0;
}
.sbtn svg {
    width: 18px;
    height: 22px;
}
.rib-collapse {
    width: 10px;
    height: 7px;
    margin: 104px 14px 0 0;
}

/* workspace */
.workspace {
    flex: 1;
    display: flex;
    min-height: 0;
    padding-top: 1px;
}
.rail {
    width: 51px;
    border-right: 1px solid #3d3d3d;
    flex: none;
    display: flex;
    flex-direction: column;
}
.rail-item {
    height: 50px;
    display: flex;
    align-items: center;
    justify-content: center;
    padding-bottom: 2px;
}
.rail-item svg {
    width: 24px;
    height: 24px;
}
.rail-on {
    box-shadow: inset 3px 0 0 #2bab91;
}
.rail-txt {
    fill: #c9c9c9;
    font: 9px "Liberation Sans", sans-serif;
}
.rail-tmdl { font-size: 8.500px; }

.center {
    width: 1417px;
    flex: none;
    display: flex;
    flex-direction: column;
}
.canvas-row {
    flex: 1;
    display: flex;
    min-height: 0;
    background: #fff;
}
.canvas {
    width: 1376px;
    flex: none;
    border-right: 1px solid #b5b5b5;
}
.page {
    height: 770px;
    background: #f5f0fc;
    overflow: hidden;
}
.page-shadow {
    height: 12px;
    margin-top: 2px;
    background: linear-gradient(#ececec, #fff);
}
.panel {
    width: 1339px;
    height: 778px;
    margin: -8px 0 0 37px;
    background: #1e1e42;
    border-radius: 32px;
    padding: 19px 14px 14px 87px;
}
.inner {
    height: 745px;
    background: #141433;
    border-radius: 32px;
    padding: 20px 10px 0 23px;
}
.row {
    display: grid;
    color: #fff;
}
.row-top {
    grid-template-columns: 364px 363px 137px 281px;
    column-gap: 20px;
    height: 204px;
}
.row-mid, .row-bot {
    grid-template-columns: 382px 412px 411px;
    background: #07104f;
}
.row-mid {
    height: 209px;
    margin-top: 27px;
}
.row-bot {
    height: 214px;
    margin-top: 46px;
}
.card, .cell {
    background: #07104f;
    display: flex;
    flex-direction: column;
    align-items: center;
    justify-content: center;
    padding-top: 17px;
}
.row-mid .cell {
    padding-top: 18px;
}
.row-mid .cell-dob {
    padding-right: 10px;
}
.card-sex {
    height: 121px;
    padding-top: 14px;
}
.val {
    font-family: Roboto, sans-serif;
    font-size: 57px;
    font-weight: 400;
    -webkit-text-stroke: 0.5px #fff;
    line-height: 66px;
    white-space: pre;
    text-align: center;
    letter-spacing: 0.2px;
}
.val-date {
    letter-spacing: -1.5px;
}
.cap {
    font-size: 16px;
    line-height: 22px;
    color: #f0f0f0;
    white-space: nowrap;
    letter-spacing: 0;
}
.slicer {
    background: #07104f;
    height: 156px;
    margin-top: -8px;
    padding: 3px 0 0 14px;
    position: relative;
}
.sl-head {
    font-weight: 700;
    font-size: 14px;
    line-height: 19px;
    color: #eee;
    margin-bottom: 3px;
    letter-spacing: 0.1px;
}
.sl-row {
    height: 31.300px;
    display: flex;
    align-items: center;
    font-size: 16px;
    color: #f0f0f0;
    letter-spacing: 0.1px;
}
.sl-box {
    width: 17px;
    height: 17px;
    border: 1px solid #8c8c8c;
    margin-right: 9px;
}
.sl-fill {
    background: #222;
    border-color: #222;
}
.sl-scroll {
    position: absolute;
    left: 268px;
    top: 25px;
    width: 8px;
    height: 22px;
    background: #b3b3b3;
}

/* filters strip */
.filters {
    width: 41px;
    flex: none;
    display: flex;
    flex-direction: column;
    align-items: center;
    color: #222;
}
.fl-chev {
    width: 10px;
    height: 10px;
    margin: 18px 0 0 2px;
}
.fl-ic {
    width: 12px;
    height: 12px;
    margin-top: 25px;
}
.fl-text {
    writing-mode: vertical-rl;
    margin-top: 11px;
    font-size: 17px;
    font-weight: 500;
    letter-spacing: 0.4px;
}

/* page tabs */
.pagebar {
    height: 44px;
    background: #2b2b2b;
    display: flex;
    flex: none;
    font-size: 14px;
}
.pb-views {
    width: 159px;
    display: flex;
    align-items: center;
    border-right: 1px solid #4a4a4a;
}
.pb-view {
    height: 100%;
    display: flex;
    flex: none;
    align-items: center;
    justify-content: center;
    position: relative;
}
.pb-view:first-child {
    width: 56px;
}
.pb-view:nth-child(2) {
    width: 54px;
}
.pb-view svg {
    width: 19px;
    height: 20px;
}
.pb-view:nth-child(2) svg {
    height: 23px;
}
.pb-view-on::after {
    content: "";
    position: absolute;
    left: 13px;
    bottom: 5px;
    width: 30px;
    height: 4px;
    border-radius: 2px;
    background: #2bab91;
}
.pb-arrow {
    width: 7px;
    height: 11px;
    flex: none;
    margin-left: 8px;
}
.pb-arrow + .pb-arrow {
    margin-left: 19px;
}
.pb-tab {
    width: 96px;
    display: flex;
    align-items: center;
    justify-content: center;
    border-right: 1px solid #4a4a4a;
    color: #eee;
    letter-spacing: 0;
}
.pb-tab-on {
    font-weight: 700;
    box-shadow: inset 0 -5px 0 #2bab91;
}
.pb-add {
    width: 49px;
    background: #2bab91;
    display: flex;
    align-items: center;
    justify-content: center;
}
.pb-add svg {
    width: 14px;
    height: 14px;
}
.plus {
    fill: none;
    stroke: #222;
    stroke-width: 3;
}

/* visualizations pane */
.viz, .data {
    flex: none;
    border-left: 1px solid #4a4a4a;
    padding-top: 11px;
    position: relative;
}
.viz {
    width: 227px;
}
.data {
    width: 225px;
}
.pane-title {
    margin: 0;
    padding: 0 0 0 10px;
    font-size: 18px;
    line-height: 26px;
    font-weight: 600;
    letter-spacing: 0;
    display: flex;
    justify-content: space-between;
    align-items: center;
}
.pane-chev {
    width: 9px;
    height: 10px;
    margin-right: 14px;
}
.pane-chev .ln {
    stroke: #fff;
    stroke-width: 2;
}
.build-label {
    margin: 11px 0 0 10px;
    font-weight: 700;
    font-size: 13.500px;
    line-height: 20px;
}
.build-tabs {
    display: flex;
    margin: 4px 0 0 10px;
    gap: 44px;
}
.build-tab {
    width: 40px;
    height: 40px;
    padding: 5px;
    border-radius: 3px;
}
.build-tab-on {
    background: #2a2a2a;
}
.build-tab svg {
    width: 30px;
    height: 30px;
}
.tealbox {
    fill: #2bab91;
    stroke: #9a9a9a;
    stroke-dasharray: 2 1;
}
.build-rule {
    height: 1px;
    background: #666;
    margin-top: 14px;
    position: relative;
}
.build-rule i {
    position: absolute;
    left: 24px;
    top: -7px;
    width: 14px;
    height: 14px;
    transform: rotate(45deg);
    background: #141414;
    border-left: 1px solid #666;
    border-top: 1px solid #666;
}
.vizgrid {
    display: grid;
    grid-template-columns: repeat(6, 35px);
    grid-auto-rows: 35px;
    margin: 14px 0 0 14px;
}
.vizgrid svg {
    width: 23px;
    height: 23px;
}
.s { fill: none; stroke: #b5b5b5; stroke-width: 1.200; }
.b { fill: #1c74c4; }
.f { fill: #8a8a8a; }
.g { fill: #2e8b3d; }
.w { fill: #e0e0e0; }
.o { fill: #e08a1e; }
.fw { fill: #cfcfcf; }
.bl { fill: none; stroke: #3a96dd; stroke-width: 1.500; }
.blx { fill: none; stroke: #3a96dd; stroke-width: 1.500; }
.blx2 { fill: none; stroke: #1c74c4; stroke-width: 2.500; }
.ring { fill: none; stroke: #1c74c4; stroke-width: 4; }
.ringg { fill: none; stroke: #8a8a8a; stroke-width: 4; }
.tri1 { fill: #2d8fd5; }
.tri2 { fill: #135c9c; }
.gg { fill: #2e9b4d; }
.rr { fill: #e0474c; }
.fn { fill: #141414; stroke: #d5d5d5; stroke-width: 1.500; }
.bolt { fill: #f2a62f; stroke: #141414; }
.oo { fill: #d9640b; }
.bk { fill: #141414; }
.pur { fill: none; stroke: #8a2a9e; stroke-width: 1.500; }
.vt { fill: #3a96dd; font: 11px "Noto Sans", sans-serif; letter-spacing: 0; }
.vr { fill: #3a96dd; font: 700 21px "Noto Sans", sans-serif; text-anchor: middle; letter-spacing: 0; }
.vpy { fill: #3a96dd; font: 500 23px "Noto Sans", sans-serif; letter-spacing: 0; }
.viz-more {
    width: 23px;
    font-size: 9px;
    color: #eee;
    letter-spacing: 0.5px;
    line-height: 18px;
    text-align: center;
    padding-left: 3px;
}
.viz-rule {
    height: 1px;
    background: #cfcfcf;
    margin-top: -1px;
}
.well-label {
    margin: 11px 0 0 15px;
    line-height: 20px;
    letter-spacing: 0;
}
.well {
    margin: 7px 7px 0 5px;
    height: 34px;
    border: 1px dashed #666;
    border-radius: 2px;
    padding-left: 13px;
    line-height: 32px;
    color: #eee;
    letter-spacing: 0.1px;
}
.drill-title {
    margin: 14px 0 0 15px;
    font-weight: 700;
    line-height: 20px;
}
.toggle-row {
    display: flex;
    justify-content: space-between;
    align-items: center;
    margin: 0 28px 0 15px;
    height: 33px;
    color: #eee;
}
.toggle-first {
    margin-top: 5px;
}
.toggle {
    width: 40px;
    height: 20px;
    border-radius: 10px;
    display: flex;
    align-items: center;
    font-size: 11px;
    letter-spacing: 0;
}
.toggle i {
    width: 12px;
    height: 12px;
    border-radius: 50%;
}
.toggle-off {
    border: 1px solid #aaa;
    color: #aaa;
    padding-left: 5px;
    gap: 1px;
}
.toggle-off i {
    background: #aaa;
}
.toggle-on {
    background: #2bab91;
    color: #1d3a34;
    padding-left: 6px;
    gap: 2px;
}
.toggle-on i {
    background: #222;
}
.well-black {
    margin-top: 7px;
    height: 32px;
    background: #000;
    padding-left: 8px;
    line-height: 30px;
    letter-spacing: 0.2px;
}

/* data pane */
.search {
    margin: 20px 6px 0 5px;
    height: 30px;
    border: 1px solid #777;
    border-radius: 4px;
    background: #1e1e1e;
    display: flex;
    align-items: center;
    padding-left: 15px;
    gap: 9px;
    color: #999;
    font-size: 15px;
    letter-spacing: 0.1px;
}
.search svg {
    width: 17px;
    height: 17px;
}
.search .ln {
    stroke: #aaa;
}
.fields {
    position: relative;
    height: 730px;
    margin-top: 9px;
    padding-left: 54px;
    overflow: hidden;
}
.field {
    height: 30px;
    display: flex;
    align-items: center;
    color: #e6e6e6;
    white-space: nowrap;
    letter-spacing: -0.2px;
}
.field-cut {
    margin: -25px 0 5px 0;
}
.cb {
    width: 15px;
    height: 15px;
    border: 1px solid #8c8c8c;
    border-radius: 2px;
    flex: none;
}
.sig {
    width: 33px;
    padding-left: 10px;
    font-family: "DejaVu Sans", sans-serif;
    font-weight: 400;
    font-size: 18px;
    color: #cfcfcf;
    flex: none;
}
.fields-scroll {
    position: absolute;
    left: 210px;
    top: 251px;
    width: 10px;
    height: 479px;
    background: #8a8a8a;
}

/* status bar */
.status {
    height: 30px;
    flex: none;
    border-top: 1px solid #555;
    display: flex;
    align-items: center;
    padding-left: 5px;
}
.status-text {
    color: #c6c6c6;
    font-size: 14px;
    letter-spacing: 0.2px;
}
.zoom-minus {
    margin-right: 7px;
    color: #ddd;
}
.zoom-track {
    position: relative;
    width: 128px;
    height: 1px;
    background: #ccc;
}
.zoom-thumb {
    position: absolute;
    left: 50px;
    top: -6px;
    width: 5px;
    height: 13px;
    background: #ccc;
}
.zoom-tick {
    position: absolute;
    left: 62px;
    top: -3px;
    width: 1px;
    height: 7px;
    background: #ccc;
}
.zoom-plus {
    margin-left: 6px;
    font-size: 18px;
    color: #ddd;
}
.zoom-pct {
    margin-left: 14px;
    color: #b9c8dc;
}
.zoom-fit {
    width: 18px;
    height: 14px;
    margin: 0 24px 0 25px;
}
.fitbox {
    fill: none;
    stroke: #8fa5c4;
}
```
